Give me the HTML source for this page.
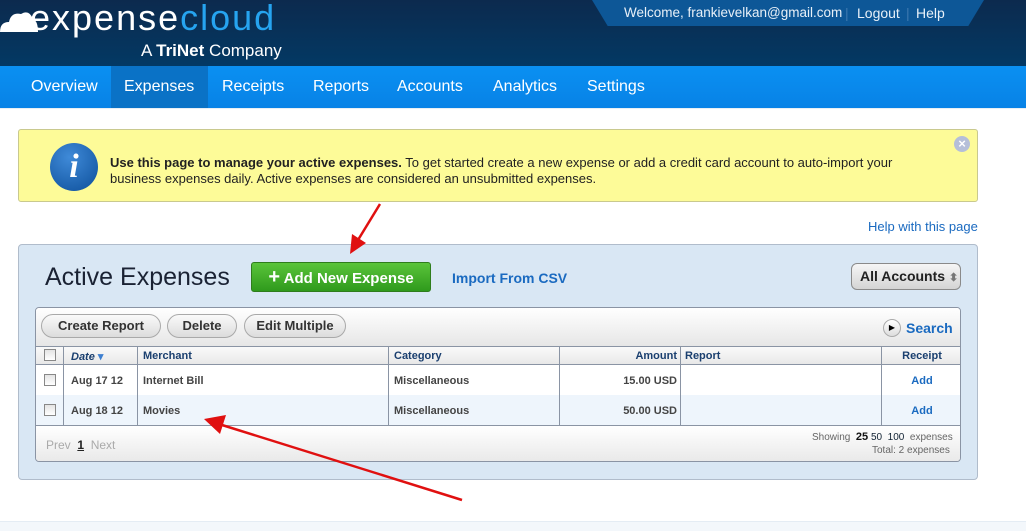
<!DOCTYPE html>
<html><head><meta charset="utf-8"><style>
*{margin:0;padding:0;box-sizing:border-box}
body{width:1026px;height:531px;overflow:hidden;background:#fff;font-family:"Liberation Sans",Arial,sans-serif;position:relative}
.a{position:absolute;white-space:nowrap}
#hdr{left:0;top:0;width:1026px;height:66px;background:linear-gradient(#0c2a4e,#033964)}
#tab{left:592px;top:0;width:392px;height:26px;background:#0d5797;clip-path:polygon(0 0,100% 0,96% 100%,4% 100%);color:#e8f0f8;font-size:14px}
#nav{left:0;top:66px;width:1026px;height:42px;background:linear-gradient(#0a90f2,#0882e6);color:#fff;font-size:16px}
#yel{left:18px;top:129px;width:960px;height:73px;background:#fdfb98;border:1px solid #c9c98e;border-radius:3px}
#panel{left:18px;top:244px;width:960px;height:236px;background:#d9e7f4;border:1px solid #b0bccb;border-radius:4px}
#tbl{left:35px;top:307px;width:926px;height:155px;background:#fff;border:1px solid #8a94a4;border-radius:4px;overflow:hidden}
.btn{position:absolute;height:24px;border:1px solid #a9a9a9;border-radius:12px;background:linear-gradient(#fafafa,#dcdcdc);font-size:13px;font-weight:bold;color:#333;text-align:center;line-height:22px}
.c{position:absolute;font-size:11px;font-weight:bold;color:#444;white-space:nowrap}
.h{color:#1a3f6f}
.vl{position:absolute;top:38px;width:1px;height:80px;background:#8a94a4}
.cb{position:absolute;left:8px;width:12px;height:12px;border:1px solid #888;background:linear-gradient(#e4e4e4,#fff)}
.lnk{color:#1a6ac0}
</style></head><body>
<div id="hdr" class="a">
 <svg class="a" style="left:0;top:8px" width="38" height="24"><path d="M0 24 Q0 14 9 14 Q11 4 21 6 Q29 1 33 11 Q38 13 38 24 Z" fill="#fff"/></svg>
 <div class="a" style="left:30px;top:-3px;font-size:36px;color:#fff;letter-spacing:2px">expense<span style="color:#26a4f0">cloud</span></div>
 <div class="a" style="left:141px;top:41px;font-size:17px;color:#fff">A <b>TriNet</b> Company</div>
</div>
<div id="tab" class="a">
 <span class="a" style="left:32px;top:5px;font-size:13.5px">Welcome, frankievelkan@gmail.com</span>
 <span class="a" style="left:253px;top:5px;color:#3d78b0">|</span>
 <span class="a" style="left:265px;top:5px">Logout</span>
 <span class="a" style="left:314px;top:5px;color:#3d78b0">|</span>
 <span class="a" style="left:324px;top:5px">Help</span>
</div>
<div id="nav" class="a">
 <div class="a" style="left:111px;top:0;width:97px;height:42px;background:#0a72c6"></div>
 <span class="a" style="left:31px;top:12px">Overview</span>
 <span class="a" style="left:124px;top:12px">Expenses</span>
 <span class="a" style="left:222px;top:12px">Receipts</span>
 <span class="a" style="left:313px;top:12px">Reports</span>
 <span class="a" style="left:397px;top:12px">Accounts</span>
 <span class="a" style="left:493px;top:12px">Analytics</span>
 <span class="a" style="left:587px;top:12px">Settings</span>
</div>
<div class="a" style="left:0;top:108px;width:1026px;height:1px;background:#e8eef4"></div>
<div id="yel" class="a">
 <div class="a" style="left:31px;top:13px;width:48px;height:48px;border-radius:50%;background:radial-gradient(circle at 40% 30%,#3f8ad8,#0d4f9a);color:#fff;font:italic bold 34px 'Liberation Serif',serif;text-align:center;line-height:48px">i</div>
 <div class="a" style="left:91px;top:25px;font-size:13px;color:#222;line-height:16px">
  <b>Use this page to manage your active expenses.</b> To get started create a new expense or add a credit card account to auto-import your<br>business expenses daily. Active expenses are considered an unsubmitted expenses.</div>
 <div class="a" style="left:935px;top:6px;width:16px;height:16px;border-radius:50%;background:#b5bfd9;color:#fff;font-size:13px;font-weight:bold;text-align:center;line-height:16px">×</div>
</div>
<div class="a lnk" style="left:868px;top:219px;font-size:13px">Help with this page</div>
<div id="panel" class="a">
 <div class="a" style="left:26px;top:18px;font-size:25px;color:#1a2233">Active Expenses</div>
 <div class="a" style="left:232px;top:17px;width:180px;height:30px;border:1px solid #2f7d1c;border-radius:3px;background:linear-gradient(#5ac43a,#2f9a1c);color:#fff;font-size:15px;font-weight:bold;text-align:center;line-height:28px"><span style="font-size:20px">+</span> Add New Expense</div>
 <div class="a lnk" style="left:433px;top:25px;font-size:14px;font-weight:bold">Import From CSV</div>
 <div class="a" style="left:832px;top:18px;width:110px;height:27px;border:1px solid #8a8a8a;border-radius:6px;background:linear-gradient(#f6f6f6,#d4d4d4);font-size:14px;font-weight:bold;color:#222;line-height:25px;padding-left:8px">All Accounts <span style="color:#777;font-size:11px">⬍</span></div>
</div>
<div id="tbl" class="a">
 <div class="a" style="left:0;top:0;width:926px;height:38px;background:linear-gradient(#fff,#e6e6e6)"></div>
 <div class="btn" style="left:5px;top:6px;width:120px">Create Report</div>
 <div class="btn" style="left:131px;top:6px;width:70px">Delete</div>
 <div class="btn" style="left:208px;top:6px;width:102px">Edit Multiple</div>
 <div class="a" style="left:847px;top:11px;width:18px;height:18px;border-radius:50%;border:1px solid #aaa;background:linear-gradient(#fff,#ddd);font-size:8px;text-align:center;line-height:16px">▶</div>
 <div class="a lnk" style="left:870px;top:12px;font-size:14px;font-weight:bold">Search</div>
 <div class="a" style="left:0;top:38px;width:926px;height:19px;background:linear-gradient(#fafafa,#e8e8e8);border-top:1px solid #8a94a4;border-bottom:1px solid #8a94a4"></div>
 <div class="a" style="left:0;top:87px;width:926px;height:30px;background:#eef5fc"></div>
 <div class="a" style="left:0;top:117px;width:926px;height:38px;background:linear-gradient(#fff,#e8e8e8);border-top:1px solid #8a94a4"></div>
 <div class="vl" style="left:27px"></div><div class="vl" style="left:101px"></div><div class="vl" style="left:352px"></div>
 <div class="vl" style="left:523px"></div><div class="vl" style="left:644px"></div><div class="vl" style="left:845px"></div>
 <div class="cb" style="top:41px"></div><div class="cb" style="top:66px"></div><div class="cb" style="top:96px"></div>
 <div class="c h" style="left:35px;top:42px;font-style:italic">Date <span style="color:#3d7fd0;font-style:normal">▾</span></div>
 <div class="c h" style="left:107px;top:42px">Merchant</div>
 <div class="c h" style="left:358px;top:42px">Category</div>
 <div class="c h" style="left:524px;top:42px;width:117px;text-align:right">Amount</div>
 <div class="c h" style="left:649px;top:42px">Report</div>
 <div class="c h" style="left:846px;top:42px;width:80px;text-align:center">Receipt</div>
 <div class="c" style="left:35px;top:67px">Aug 17 12</div>
 <div class="c" style="left:107px;top:67px">Internet Bill</div>
 <div class="c" style="left:358px;top:67px">Miscellaneous</div>
 <div class="c" style="left:524px;top:67px;width:117px;text-align:right">15.00 USD</div>
 <div class="c lnk" style="left:846px;top:67px;width:80px;text-align:center">Add</div>
 <div class="c" style="left:35px;top:97px">Aug 18 12</div>
 <div class="c" style="left:107px;top:97px">Movies</div>
 <div class="c" style="left:358px;top:97px">Miscellaneous</div>
 <div class="c" style="left:524px;top:97px;width:117px;text-align:right">50.00 USD</div>
 <div class="c lnk" style="left:846px;top:97px;width:80px;text-align:center">Add</div>
 <div class="a" style="left:10px;top:130px;font-size:12px;color:#aaa">Prev &nbsp;<b style="color:#222;text-decoration:underline">1</b>&nbsp; Next</div>
 <div class="a" style="left:776px;top:123px;font-size:10px;color:#666">Showing &nbsp;<b style="color:#111;font-size:11px">25</b> <span style="color:#123">50</span> &nbsp;<span style="color:#123">100</span> &nbsp;expenses</div>
 <div class="a" style="left:836px;top:137px;font-size:10px;color:#666">Total: 2 expenses</div>
</div>
<div class="a" style="left:0;top:521px;width:1026px;height:10px;background:#f3f7fb;border-top:1px solid #e4ecf4"></div>
<svg class="a" style="left:0;top:0" width="1026" height="531">
 <line x1="380" y1="204" x2="358" y2="240" stroke="#e01010" stroke-width="2.5"/>
 <polygon points="350,254 352,234 366,243" fill="#e01010"/>
 <line x1="462" y1="500" x2="222" y2="425" stroke="#e01010" stroke-width="2.5"/>
 <polygon points="204,419 226,415 220,434" fill="#e01010"/>
</svg>
</body></html>
